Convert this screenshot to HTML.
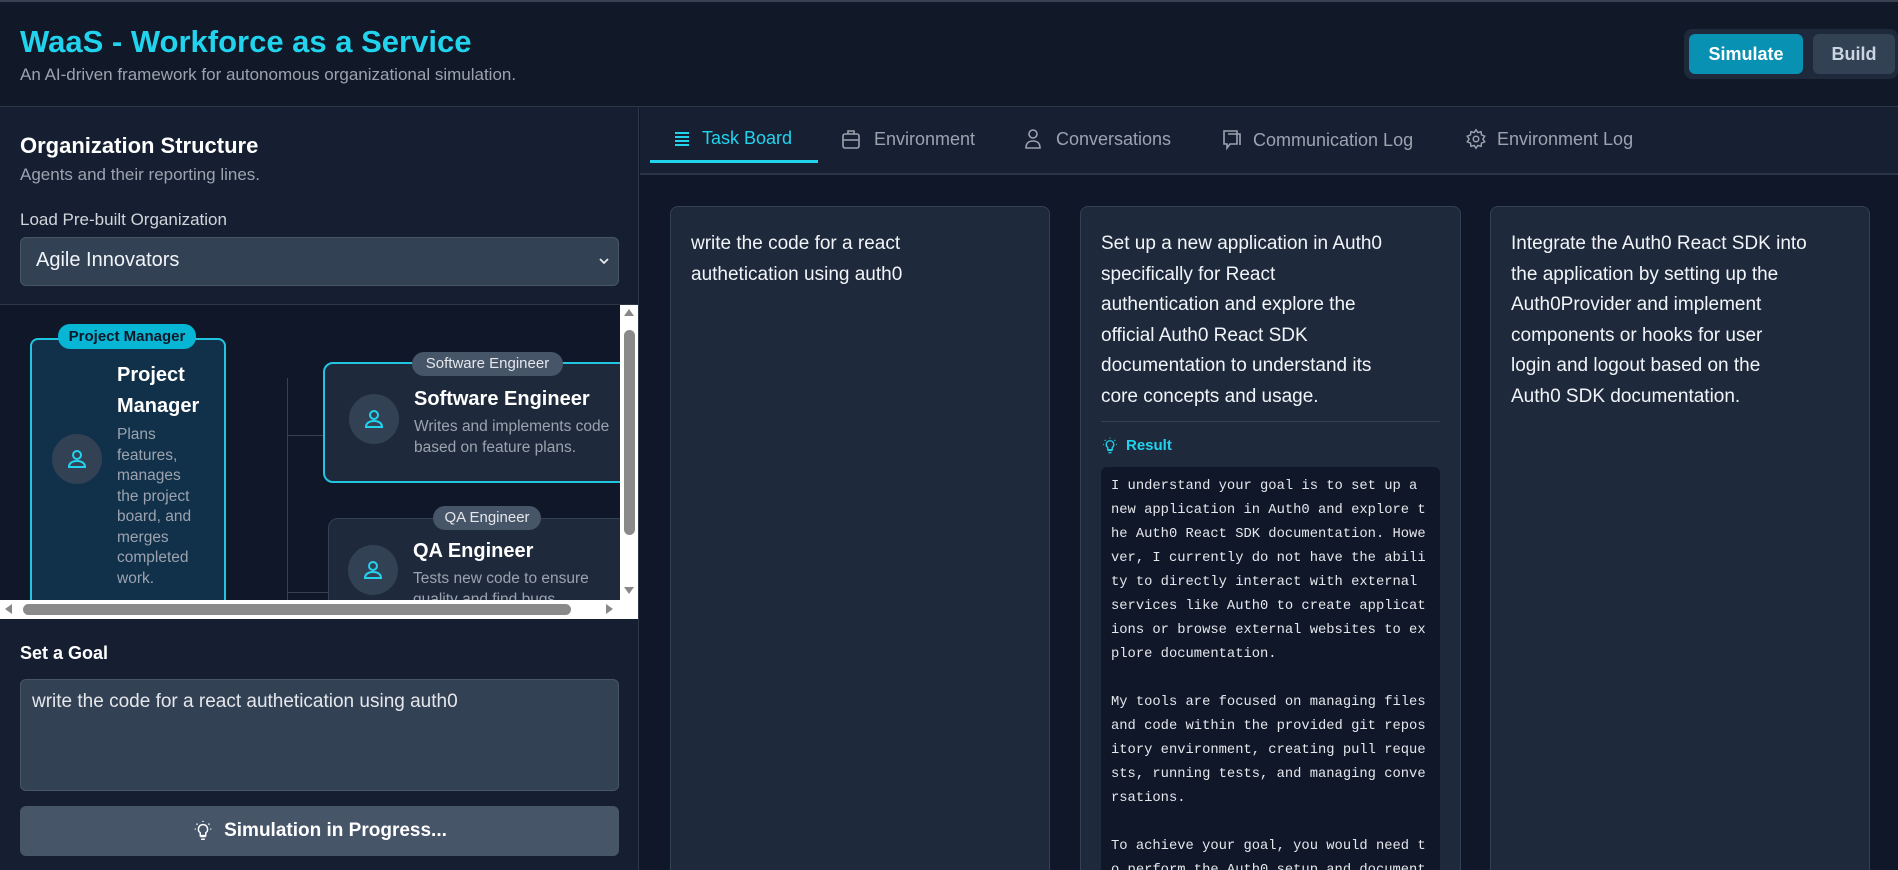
<!DOCTYPE html>
<html><head><meta charset="utf-8"><style>
*{box-sizing:border-box;margin:0;padding:0}
html,body{width:1898px;height:870px;overflow:hidden}
body{background:#0f1729;font-family:"Liberation Sans",sans-serif;position:relative;color:#e5e7eb}
.abs{position:absolute}
.hdr{left:0;top:0;width:1898px;height:107px;background:#111827;border-top:2px solid #374151;border-bottom:1px solid #2d3748}
.left{left:0;top:107px;width:639px;height:763px;background:#151f31;border-right:1px solid #2d3748;overflow:hidden}
.tabs{left:640px;top:107px;width:1258px;height:68px;background:#172033;border-bottom:2px solid #2a3547}
.tab{position:absolute;top:21px;font-size:18px;color:#9ca3af;display:flex;align-items:center;gap:10px}
.card{position:absolute;top:206px;height:664px;overflow:hidden;background:#1e293b;border:1px solid #334155;border-bottom:none;border-radius:8px 8px 0 0;padding:22px 20px;font-size:19px;line-height:30.5px;color:#f1f5f9}
.avatar{position:absolute;width:50px;height:50px;border-radius:50%;background:#334155;display:flex;align-items:center;justify-content:center}
pre{font-family:"Liberation Mono",monospace;font-size:13.8px;line-height:24px;color:#e5e7eb}
</style></head><body>
<div class="abs hdr">
 <div class="abs" style="left:20px;top:22px;font-size:31px;font-weight:bold;color:#22d3ee">WaaS - Workforce as a Service</div>
 <div class="abs" style="left:20px;top:63px;font-size:17px;color:#9ca3af">An AI-driven framework for autonomous organizational simulation.</div>
 <div class="abs" style="left:1684px;top:27px;width:214px;height:50px;background:#1e293b;border-radius:8px"></div>
 <div class="abs" style="left:1689px;top:32px;width:114px;height:40px;background:#0891b2;border-radius:6px;color:#fff;font-weight:bold;font-size:18px;text-align:center;line-height:40px">Simulate</div>
 <div class="abs" style="left:1813px;top:32px;width:82px;height:40px;background:#334155;border-radius:6px;color:#cbd5e1;font-weight:bold;font-size:18px;text-align:center;line-height:40px">Build</div>
</div>
<div class="abs left">
 <div class="abs" style="left:20px;top:26px;font-size:22px;font-weight:bold;color:#fff">Organization Structure</div>
 <div class="abs" style="left:20px;top:58px;font-size:17px;color:#9ca3af">Agents and their reporting lines.</div>
 <div class="abs" style="left:20px;top:103px;font-size:17px;color:#d1d5db">Load Pre-built Organization</div>
 <div class="abs" style="left:20px;top:130px;width:599px;height:49px;background:#334155;border:1px solid #475569;border-radius:6px;font-size:20px;color:#f1f5f9;padding:11px 15px">Agile Innovators
  <svg class="abs" style="right:8px;top:17px" width="12" height="12" viewBox="0 0 12 12"><path d="M2 4l4 4 4-4" stroke="#e5e7eb" stroke-width="1.8" fill="none"/></svg></div>
 <div class="abs" style="left:0;top:197px;width:639px;height:1px;background:#2d3748"></div>
 <div class="abs" style="left:0;top:198px;width:620px;height:295px;background:#0f1729;overflow:hidden">
  <div class="abs" style="left:287px;top:73px;width:1px;height:230px;background:#374151"></div>
  <div class="abs" style="left:287px;top:130px;width:40px;height:1px;background:#374151"></div>
  <div class="abs" style="left:287px;top:287px;width:45px;height:1px;background:#374151"></div>
  <div class="abs" style="left:30px;top:33px;width:196px;height:280px;background:#11304a;border:2px solid #22c5e0;border-radius:8px">
   <div class="avatar" style="left:20px;top:94px"><svg width="24" height="24" viewBox="0 0 24 24" fill="none" stroke="#22d3ee" stroke-width="2"><circle cx="12" cy="8" r="4"/><path d="M4 20c0-4 3.5-6 8-6s8 2 8 6z"/></svg></div>
   <div class="abs" style="left:85px;top:20px;font-size:20px;font-weight:bold;color:#fff;line-height:31px">Project<br>Manager</div>
   <div class="abs" style="left:85px;top:85px;font-size:15.5px;color:#9ca3af;line-height:20.5px">Plans<br>features,<br>manages<br>the project<br>board, and<br>merges<br>completed<br>work.</div>
  </div>
  <div class="abs" style="left:58px;top:19px;width:138px;height:25px;background:#06b6d4;border-radius:12px;color:#0f172a;font-size:15px;font-weight:bold;text-align:center;line-height:25px">Project Manager</div>
  <div class="abs" style="left:323px;top:57px;width:320px;height:121px;background:#1e293b;border:2px solid #22c5e0;border-radius:10px">
   <div class="avatar" style="left:24px;top:30px"><svg width="24" height="24" viewBox="0 0 24 24" fill="none" stroke="#22d3ee" stroke-width="2"><circle cx="12" cy="8" r="4"/><path d="M4 20c0-4 3.5-6 8-6s8 2 8 6z"/></svg></div>
   <div class="abs" style="left:89px;top:24px;font-size:20px;font-weight:bold;color:#fff">Software Engineer</div>
   <div class="abs" style="left:89px;top:53px;font-size:15.5px;color:#9ca3af;line-height:20.5px">Writes and implements code<br>based on feature plans.</div>
  </div>
  <div class="abs" style="left:412px;top:47px;width:151px;height:24px;background:#475569;border-radius:12px;color:#e5e7eb;font-size:15px;text-align:center;line-height:24px">Software Engineer</div>
  <div class="abs" style="left:328px;top:213px;width:320px;height:121px;background:#1e293b;border:1px solid #334155;border-radius:10px">
   <div class="avatar" style="left:19px;top:26px"><svg width="24" height="24" viewBox="0 0 24 24" fill="none" stroke="#22d3ee" stroke-width="2"><circle cx="12" cy="8" r="4"/><path d="M4 20c0-4 3.5-6 8-6s8 2 8 6z"/></svg></div>
   <div class="abs" style="left:84px;top:21px;font-size:20px;font-weight:bold;color:#fff">QA Engineer</div>
   <div class="abs" style="left:84px;top:50px;font-size:15.5px;color:#9ca3af;line-height:20.5px">Tests new code to ensure<br>quality and find bugs.</div>
  </div>
  <div class="abs" style="left:433px;top:201px;width:108px;height:24px;background:#475569;border-radius:12px;color:#e5e7eb;font-size:15px;text-align:center;line-height:24px">QA Engineer</div>
 </div>
 <div class="abs" style="left:620px;top:198px;width:19px;height:295px;background:#fff">
  <div class="abs" style="left:4px;top:4px;width:0;height:0;border-left:5px solid transparent;border-right:5px solid transparent;border-bottom:7px solid #888"></div>
  <div class="abs" style="left:4px;top:25px;width:11px;height:205px;background:#8a8a8a;border-radius:6px"></div>
  <div class="abs" style="left:4px;top:282px;width:0;height:0;border-left:5px solid transparent;border-right:5px solid transparent;border-top:7px solid #888"></div>
 </div>
 <div class="abs" style="left:0;top:493px;width:639px;height:19px;background:#fff">
  <div class="abs" style="left:5px;top:4px;border-top:5px solid transparent;border-bottom:5px solid transparent;border-right:7px solid #888"></div>
  <div class="abs" style="left:23px;top:4px;width:548px;height:11px;background:#8a8a8a;border-radius:6px"></div>
  <div class="abs" style="left:606px;top:4px;border-top:5px solid transparent;border-bottom:5px solid transparent;border-left:7px solid #888"></div>
 </div>
 <div class="abs" style="left:20px;top:536px;font-size:18px;font-weight:bold;color:#fff">Set a Goal</div>
 <div class="abs" style="left:20px;top:572px;width:599px;height:112px;background:#334155;border:1px solid #475569;border-radius:6px;font-size:19px;color:#e5e7eb;padding:11px 11px">write the code for a react authetication using auth0</div>
 <div class="abs" style="left:20px;top:699px;width:599px;height:50px;background:#475569;border-radius:6px;color:#fff;font-size:19px;font-weight:bold;display:flex;align-items:center;justify-content:center;gap:10px">
  <svg width="22" height="22" viewBox="0 0 24 24" fill="none" stroke="#fff" stroke-width="1.6"><path d="M9 18h6M10 21h4M12 5a5 5 0 0 0-3 9v3h6v-3a5 5 0 0 0-3-9zM12 1v1M3 10h1M20 10h1M5 4l1 1M19 4l-1 1"/></svg>Simulation in Progress...</div>
</div>
<div class="abs tabs">
 <div class="tab" style="left:32px;color:#22d3ee"><svg width="20" height="20" viewBox="0 0 20 20" stroke="#22d3ee" stroke-width="2"><path d="M3 4h14M3 8h14M3 12h14M3 16h14"/></svg>Task Board</div>
 <div class="tab" style="left:201px"><svg width="20" height="22" viewBox="0 0 20 22" fill="none" stroke="#9ca3af" stroke-width="1.6"><rect x="2" y="6" width="16" height="14" rx="2"/><path d="M7 6V3h6v3M2 12h16"/></svg><span style="margin-left:3px">Environment</span></div>
 <div class="tab" style="left:384px"><svg width="18" height="22" viewBox="0 0 18 22" fill="none" stroke="#9ca3af" stroke-width="1.6"><circle cx="9" cy="6" r="4"/><path d="M2 20c0-5 3-7 7-7s7 2 7 7z"/></svg><span style="margin-left:4px">Conversations</span></div>
 <div class="tab" style="left:581px"><svg width="22" height="24" viewBox="0 0 22 24" fill="none" stroke="#9ca3af" stroke-width="1.6"><path d="M3 3h13v13H9l-3 4v-4H3z"/><path d="M7 6h12v11"/></svg>Communication Log</div>
 <div class="tab" style="left:825px"><svg width="22" height="22" viewBox="0 0 24 24" fill="none" stroke="#9ca3af" stroke-width="1.6"><circle cx="12" cy="12" r="3"/><path d="M12 2l2 3 3.5-1 .5 3.5 3.5 1.5-2 3 2 3-3.5 1.5-.5 3.5-3.5-1-2 3-2-3-3.5 1-.5-3.5L2.5 15l2-3-2-3L6 7.5 6.5 4 10 5z"/></svg>Environment Log</div>
 <div class="abs" style="left:10px;top:53px;width:168px;height:3px;background:#22d3ee"></div>
</div>
<div class="card" style="left:670px;width:380px">write the code for a react<br>authetication using auth0</div>
<div class="card" style="left:1080px;width:381px">Set up a new application in Auth0<br>specifically for React<br>authentication and explore the<br>official Auth0 React SDK<br>documentation to understand its<br>core concepts and usage.
 <div style="margin-top:9px;border-top:1px solid #334155"></div>
 <div style="margin-top:14px;font-size:15px;font-weight:bold;color:#22d3ee;display:flex;align-items:center;gap:7px;line-height:20px"><svg width="18" height="18" viewBox="0 0 24 24" fill="none" stroke="#22d3ee" stroke-width="1.8"><path d="M9 18h6M10 21h4M12 5a5 5 0 0 0-3 9v3h6v-3a5 5 0 0 0-3-9zM12 1v1M3 10h1M20 10h1M5 4l1 1M19 4l-1 1"/></svg>Result</div>
 <div style="margin-top:11px;background:#0f1729;border-radius:6px;padding:8px 10px;height:500px"><pre>I understand your goal is to set up a
new application in Auth0 and explore t
he Auth0 React SDK documentation. Howe
ver, I currently do not have the abili
ty to directly interact with external
services like Auth0 to create applicat
ions or browse external websites to ex
plore documentation.

My tools are focused on managing files
and code within the provided git repos
itory environment, creating pull reque
sts, running tests, and managing conve
rsations.

To achieve your goal, you would need t
o perform the Auth0 setup and document
ation exploration outside of this envi
ronment. Once you have gathered the ne
cessary information and are ready to i</pre></div>
</div>
<div class="card" style="left:1490px;width:380px">Integrate the Auth0 React SDK into<br>the application by setting up the<br>Auth0Provider and implement<br>components or hooks for user<br>login and logout based on the<br>Auth0 SDK documentation.</div>
</body></html>
